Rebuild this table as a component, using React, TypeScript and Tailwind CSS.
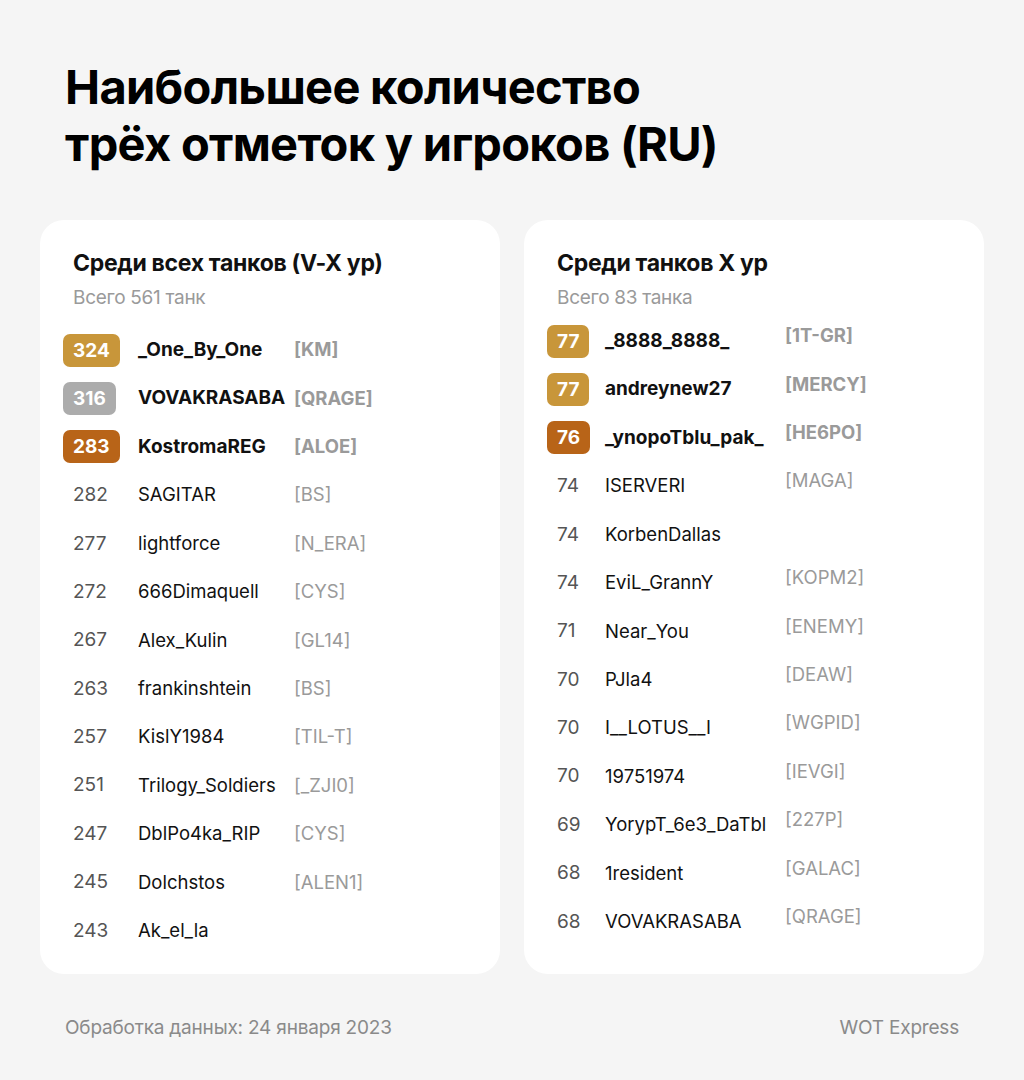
import React from 'react';

type Row = { score: number; name: string; clan?: string; medal?: 'gold' | 'silver' | 'bronze' };

const allTanks: Row[] = [
  { score: 324, name: '_One_By_One', clan: '[KM]', medal: 'gold' },
  { score: 316, name: 'VOVAKRASABA', clan: '[QRAGE]', medal: 'silver' },
  { score: 283, name: 'KostromaREG', clan: '[ALOE]', medal: 'bronze' },
  { score: 282, name: 'SAGITAR', clan: '[BS]' },
  { score: 277, name: 'lightforce', clan: '[N_ERA]' },
  { score: 272, name: '666Dimaquell', clan: '[CYS]' },
  { score: 267, name: 'Alex_Kulin', clan: '[GL14]' },
  { score: 263, name: 'frankinshtein', clan: '[BS]' },
  { score: 257, name: 'KislY1984', clan: '[TIL-T]' },
  { score: 251, name: 'Trilogy_Soldiers', clan: '[_ZJI0]' },
  { score: 247, name: 'DblPo4ka_RIP', clan: '[CYS]' },
  { score: 245, name: 'Dolchstos', clan: '[ALEN1]' },
  { score: 243, name: 'Ak_el_la' },
];

const tierTen: Row[] = [
  { score: 77, name: '_8888_8888_', clan: '[1T-GR]', medal: 'gold' },
  { score: 77, name: 'andreynew27', clan: '[MERCY]', medal: 'gold' },
  { score: 76, name: '_ynopoTblu_pak_', clan: '[HE6PO]', medal: 'bronze' },
  { score: 74, name: 'ISERVERI', clan: '[MAGA]' },
  { score: 74, name: 'KorbenDallas' },
  { score: 74, name: 'EviL_GrannY', clan: '[KOPM2]' },
  { score: 71, name: 'Near_You', clan: '[ENEMY]' },
  { score: 70, name: 'PJla4', clan: '[DEAW]' },
  { score: 70, name: 'I__LOTUS__I', clan: '[WGPID]' },
  { score: 70, name: '19751974', clan: '[IEVGI]' },
  { score: 69, name: 'YorypT_6e3_DaTbl', clan: '[227P]' },
  { score: 68, name: '1resident', clan: '[GALAC]' },
  { score: 68, name: 'VOVAKRASABA', clan: '[QRAGE]' },
];

const medalBg = {
  gold: 'bg-[#c8963a]',
  silver: 'bg-[#acacac]',
  bronze: 'bg-[#b86418]',
};

const font = { fontFamily: 'Inter, "Noto Sans", sans-serif' };

const Card: React.FC<{
  title: string;
  subtitle: string;
  rows: Row[];
  scoreCol: string;
  nameCol: string;
  listTop: string;
  clanShift?: boolean;
}> = ({ title, subtitle, rows, scoreCol, nameCol, listTop, clanShift }) => (
  <div className="flex-1 bg-white rounded-[24px] pt-[28px] pb-[19px] pl-[23px] pr-4">
    <div className="pl-[10px] text-[23px] leading-[30px] font-bold text-[#111] tracking-[-0.3px]">{title}</div>
    <div className="pl-[10px] mt-[8px] text-[19px] leading-[24px] text-[#9a9a9a] tracking-[-0.3px]">{subtitle}</div>
    <div className={`flex flex-col ${listTop}`}>
      {rows.map((r, i) => (
        <div key={i} className="flex items-center h-[48.4px] text-[18.5px]">
          <div className={`${scoreCol} flex`}>
            {r.medal ? (
              <span
                className={`${medalBg[r.medal]} text-white font-bold text-[19px] rounded-[7px] h-[33px] px-[10px] flex items-center leading-none`}
              >
                {r.score}
              </span>
            ) : (
              <span className="px-[10px] text-[#555] text-[19px]">{r.score}</span>
            )}
          </div>
          <div className={`${nameCol} text-[#111] whitespace-nowrap ${r.medal ? 'font-bold text-[19px]' : ''}`}>
            {r.name}
          </div>
          <div
            className={`text-[#9a9a9a] whitespace-nowrap ${r.medal ? 'font-bold' : ''} ${clanShift ? '-translate-y-[5px]' : ''}`}
          >
            {r.clan}
          </div>
        </div>
      ))}
    </div>
  </div>
);

export default function App() {
  return (
    <div className="w-[1024px] h-[1080px] bg-[#f5f5f5] flex flex-col" style={font}>
      <h1 className="pl-[65px] pt-[58px] text-[47px] leading-[57px] font-bold text-black tracking-[-0.7px]">
        Наибольшее количество
        <br />
        трёх отметок у игроков (RU)
      </h1>
      <div className="flex gap-6 px-10 mt-[48px]">
        <Card
          title="Среди всех танков (V-X ур)"
          subtitle="Всего 561 танк"
          rows={allTanks}
          scoreCol="w-[75px]"
          nameCol="w-[156px]"
          listTop="mt-[16px]"
        />
        <Card
          title="Среди танков X ур"
          subtitle="Всего 83 танка"
          rows={tierTen}
          scoreCol="w-[58px]"
          nameCol="w-[180px]"
          listTop="mt-[7px]"
          clanShift
        />
      </div>
      <div className="flex justify-between pl-[65px] pr-[65px] mt-[40px] text-[19px] text-[#8a8a8a] tracking-[-0.2px]">
        <span>Обработка данных: 24 января 2023</span>
        <span>WOT Express</span>
      </div>
    </div>
  );
}
